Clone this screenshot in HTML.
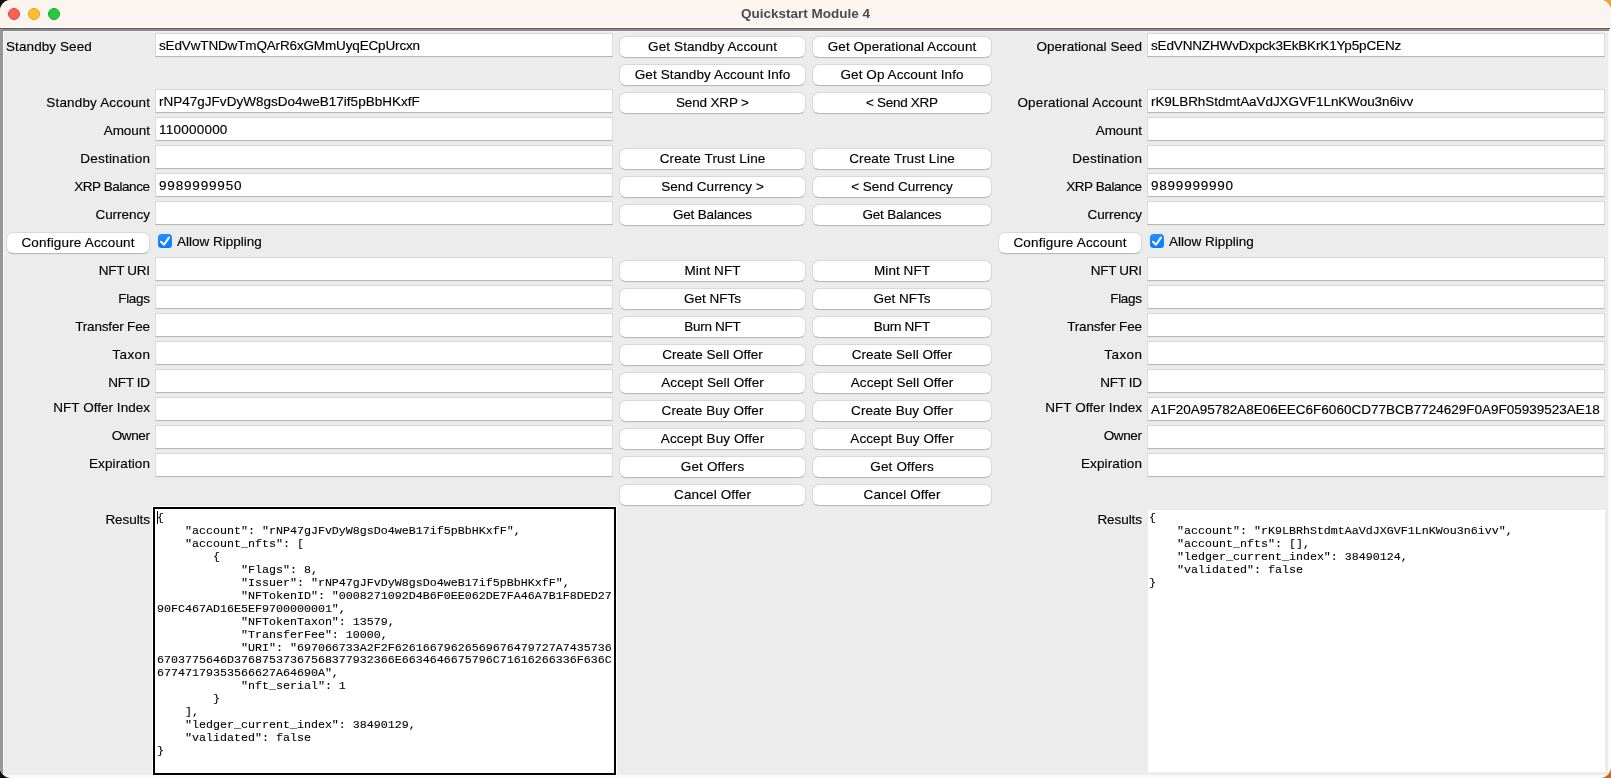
<!DOCTYPE html>
<html><head><meta charset="utf-8"><title>Quickstart Module 4</title>
<style>
*{box-sizing:border-box;margin:0;padding:0}
html,body{width:1611px;height:778px;overflow:hidden;background:#fdfdfd;position:relative;font-family:"Liberation Sans",sans-serif;color:#1a1a1a}
.abs{position:absolute}
#tl{left:0;top:0;width:14px;height:14px;background:#111}
#tr{left:1597px;top:0;width:14px;height:14px;background:#f0a23c}
#bl{left:0;top:764px;width:14px;height:14px;background:#111}
#br{left:1597px;top:764px;width:14px;height:14px;background:#d2601e}
#frame{will-change:transform;left:0;top:0;width:1611px;height:778px;background:#fbfbfb;border-radius:11px;overflow:hidden}
#win{left:0;top:28px;width:1608px;height:747px;background:#ececec}
#title{left:0;top:0;width:1611px;height:28px;background:#fbf4ef}
#tline1{left:0;top:27px;width:1611px;height:1px;background:#fffdf9}
#tline2{left:0;top:28px;width:1610px;height:1px;background:#5c5c5c}
#tline3{left:0;top:29px;width:1609px;height:2px;background:#8b8b8b}
#lborder{left:0;top:29px;width:3px;height:746px;background:#969696}
#lhi{left:3px;top:31px;width:1px;height:744px;background:#f6f6f6}
#thi{left:3px;top:31px;width:1605px;height:1px;background:#f3f3f3}
.dot{position:absolute;top:8px;width:12px;height:12px;border-radius:50%}
#ttext{left:0;top:0;width:1611px;text-align:center;font-weight:bold;font-size:13.5px;line-height:28px;color:#4c4c4c}
.lbl{position:absolute;font-size:13.5px;-webkit-text-stroke:0.15px #000;white-space:nowrap;line-height:16px;color:#000}
.lbl.r{text-align:right}
.ent{position:absolute;width:458px;height:24px;background:#fff;border-left:1px solid #dadada;border-right:1px solid #dadada;border-top:1px solid #d6d6d6;border-bottom:1px solid #b9b9b9;box-shadow:0 1px 0 #e6e6e6}
.ent span{position:absolute;left:3px;font-size:13.5px;-webkit-text-stroke:0.15px #000;line-height:16px;white-space:nowrap;color:#000}
.btn{position:absolute;height:22px;background:#fff;border-radius:7px;border:1px solid #d8d8d8;border-bottom-color:#bababa;box-shadow:0 0.5px 0.5px rgba(0,0,0,0.06)}
.btn span{position:absolute;left:0;right:0;text-align:center;font-size:13.5px;-webkit-text-stroke:0.15px #000;line-height:16px;white-space:nowrap;color:#000}
.cb{position:absolute;width:14px;height:14px;background:linear-gradient(#2a8bff,#0a7bff);border-radius:3.5px}
.mono{position:absolute;font-family:"Liberation Mono",monospace;font-size:11.667px;line-height:12.95px;white-space:pre;color:#000;-webkit-text-stroke:0.1px #000}
</style></head><body>
<div class="abs" id="tl"></div><div class="abs" id="tr"></div><div class="abs" id="bl"></div><div class="abs" id="br"></div>
<div class="abs" id="frame">
<div class="abs" id="title"></div><div class="abs" id="win"></div>
<div class="abs" id="tline1"></div><div class="abs" id="tline2"></div><div class="abs" id="tline3"></div>
<div class="abs" id="lborder"></div><div class="abs" id="lhi"></div><div class="abs" id="thi"></div>
<div class="dot" style="left:8px;background:#fe5f57;border:0.5px solid #e2463f"></div>
<div class="dot" style="left:28px;background:#febc2e;border:0.5px solid #e1a116"></div>
<div class="dot" style="left:48px;background:#28c840;border:0.5px solid #12ac28"></div>
<div class="abs" id="ttext">Quickstart Module 4</div>

<div class="lbl r" style="left:-150px;width:300px;top:95px;letter-spacing:0.171px;transform:translateX(0.171px)">Standby Account</div>
<div class="lbl r" style="left:-150px;width:300px;top:123px;letter-spacing:-0.040px;transform:translateX(-0.040px)">Amount</div>
<div class="lbl r" style="left:-150px;width:300px;top:151px;letter-spacing:0.220px;transform:translateX(0.220px)">Destination</div>
<div class="lbl r" style="left:-150px;width:300px;top:179px;letter-spacing:-0.420px;transform:translateX(-0.420px)">XRP Balance</div>
<div class="lbl r" style="left:-150px;width:300px;top:207px;letter-spacing:-0.029px;transform:translateX(-0.029px)">Currency</div>
<div class="lbl r" style="left:-150px;width:300px;top:263px;letter-spacing:-0.300px;transform:translateX(-0.300px)">NFT URI</div>
<div class="lbl r" style="left:-150px;width:300px;top:291px;letter-spacing:-0.300px;transform:translateX(-0.300px)">Flags</div>
<div class="lbl r" style="left:-150px;width:300px;top:319px;letter-spacing:-0.182px;transform:translateX(-0.182px)">Transfer Fee</div>
<div class="lbl r" style="left:-150px;width:300px;top:347px;letter-spacing:0.400px;transform:translateX(0.400px)">Taxon</div>
<div class="lbl r" style="left:-150px;width:300px;top:375px;letter-spacing:-0.320px;transform:translateX(-0.320px)">NFT ID</div>
<div class="lbl r" style="left:-150px;width:300px;top:400px;letter-spacing:0.029px;transform:translateX(0.029px)">NFT Offer Index</div>
<div class="lbl r" style="left:-150px;width:300px;top:428px;letter-spacing:-0.350px;transform:translateX(-0.350px)">Owner</div>
<div class="lbl r" style="left:-150px;width:300px;top:456px;letter-spacing:0.111px;transform:translateX(0.111px)">Expiration</div>
<div class="ent" style="left:155px;top:33px"><span style="top:4px;letter-spacing:-0.147px;transform:translateX(0.000px)">sEdVwTNDwTmQArR6xGMmUyqECpUrcxn</span></div>
<div class="ent" style="left:155px;top:89px"><span style="top:4px;letter-spacing:0.012px;transform:translateX(0.000px)">rNP47gJFvDyW8gsDo4weB17if5pBbHKxfF</span></div>
<div class="ent" style="left:155px;top:117px"><span style="top:4px;letter-spacing:0.225px;transform:translateX(0.000px)">110000000</span></div>
<div class="ent" style="left:155px;top:145px"><span style="top:4px"></span></div>
<div class="ent" style="left:155px;top:173px"><span style="top:4px;letter-spacing:0.822px;transform:translateX(0.000px)">9989999950</span></div>
<div class="ent" style="left:155px;top:201px"><span style="top:4px"></span></div>
<div class="ent" style="left:155px;top:257px"><span style="top:4px"></span></div>
<div class="ent" style="left:155px;top:285px"><span style="top:4px"></span></div>
<div class="ent" style="left:155px;top:313px"><span style="top:4px"></span></div>
<div class="ent" style="left:155px;top:341px"><span style="top:4px"></span></div>
<div class="ent" style="left:155px;top:369px"><span style="top:4px"></span></div>
<div class="ent" style="left:155px;top:397px"><span style="top:4px"></span></div>
<div class="ent" style="left:155px;top:425px"><span style="top:4px"></span></div>
<div class="ent" style="left:155px;top:453px"><span style="top:4px"></span></div>
<div class="lbl r" style="left:842px;width:300px;top:95px;letter-spacing:0.167px;transform:translateX(0.167px)">Operational Account</div>
<div class="lbl r" style="left:842px;width:300px;top:123px;letter-spacing:-0.040px;transform:translateX(-0.040px)">Amount</div>
<div class="lbl r" style="left:842px;width:300px;top:151px;letter-spacing:0.220px;transform:translateX(0.220px)">Destination</div>
<div class="lbl r" style="left:842px;width:300px;top:179px;letter-spacing:-0.420px;transform:translateX(-0.420px)">XRP Balance</div>
<div class="lbl r" style="left:842px;width:300px;top:207px;letter-spacing:-0.029px;transform:translateX(-0.029px)">Currency</div>
<div class="lbl r" style="left:842px;width:300px;top:263px;letter-spacing:-0.300px;transform:translateX(-0.300px)">NFT URI</div>
<div class="lbl r" style="left:842px;width:300px;top:291px;letter-spacing:-0.300px;transform:translateX(-0.300px)">Flags</div>
<div class="lbl r" style="left:842px;width:300px;top:319px;letter-spacing:-0.182px;transform:translateX(-0.182px)">Transfer Fee</div>
<div class="lbl r" style="left:842px;width:300px;top:347px;letter-spacing:0.400px;transform:translateX(0.400px)">Taxon</div>
<div class="lbl r" style="left:842px;width:300px;top:375px;letter-spacing:-0.320px;transform:translateX(-0.320px)">NFT ID</div>
<div class="lbl r" style="left:842px;width:300px;top:400px;letter-spacing:0.029px;transform:translateX(0.029px)">NFT Offer Index</div>
<div class="lbl r" style="left:842px;width:300px;top:428px;letter-spacing:-0.350px;transform:translateX(-0.350px)">Owner</div>
<div class="lbl r" style="left:842px;width:300px;top:456px;letter-spacing:0.111px;transform:translateX(0.111px)">Expiration</div>
<div class="lbl r" style="left:842px;width:300px;top:39px;letter-spacing:0.027px;transform:translateX(0.027px)">Operational Seed</div>
<div class="ent" style="left:1147px;top:33px"><span style="top:4px;letter-spacing:-0.153px;transform:translateX(0.000px)">sEdVNNZHWvDxpck3EkBKrK1Yp5pCENz</span></div>
<div class="ent" style="left:1147px;top:89px"><span style="top:4px;letter-spacing:-0.073px;transform:translateX(0.000px)">rK9LBRhStdmtAaVdJXGVF1LnKWou3n6ivv</span></div>
<div class="ent" style="left:1147px;top:117px"><span style="top:4px"></span></div>
<div class="ent" style="left:1147px;top:145px"><span style="top:4px"></span></div>
<div class="ent" style="left:1147px;top:173px"><span style="top:4px;letter-spacing:0.778px;transform:translateX(0.000px)">9899999990</span></div>
<div class="ent" style="left:1147px;top:201px"><span style="top:4px"></span></div>
<div class="ent" style="left:1147px;top:257px"><span style="top:4px"></span></div>
<div class="ent" style="left:1147px;top:285px"><span style="top:4px"></span></div>
<div class="ent" style="left:1147px;top:313px"><span style="top:4px"></span></div>
<div class="ent" style="left:1147px;top:341px"><span style="top:4px"></span></div>
<div class="ent" style="left:1147px;top:369px"><span style="top:4px"></span></div>
<div class="ent" style="left:1147px;top:397px"><span style="top:4px">A1F20A95782A8E06EEC6F6060CD77BCB7724629F0A9F05939523AE18</span></div>
<div class="ent" style="left:1147px;top:425px"><span style="top:4px"></span></div>
<div class="ent" style="left:1147px;top:453px"><span style="top:4px"></span></div>
<div class="lbl" style="left:6px;top:39px;letter-spacing:0.091px;transform:translateX(0.000px)">Standby Seed</div>
<div class="btn" style="left:619px;width:187px;top:36px"><span style="top:2px;letter-spacing:0.111px;transform:translateX(0.056px)">Get Standby Account</span></div>
<div class="btn" style="left:812px;width:180px;top:36px"><span style="top:2px;letter-spacing:0.064px;transform:translateX(0.032px)">Get Operational Account</span></div>
<div class="btn" style="left:619px;width:187px;top:64px"><span style="top:2px;letter-spacing:0.104px;transform:translateX(0.052px)">Get Standby Account Info</span></div>
<div class="btn" style="left:812px;width:180px;top:64px"><span style="top:2px;letter-spacing:0.078px;transform:translateX(0.039px)">Get Op Account Info</span></div>
<div class="btn" style="left:619px;width:187px;top:92px"><span style="top:2px;letter-spacing:-0.156px;transform:translateX(-0.078px)">Send XRP &gt;</span></div>
<div class="btn" style="left:812px;width:180px;top:92px"><span style="top:2px;letter-spacing:-0.289px;transform:translateX(-0.144px)">&lt; Send XRP</span></div>
<div class="btn" style="left:619px;width:187px;top:148px"><span style="top:2px;letter-spacing:0.125px;transform:translateX(0.062px)">Create Trust Line</span></div>
<div class="btn" style="left:812px;width:180px;top:148px"><span style="top:2px;letter-spacing:0.125px;transform:translateX(0.062px)">Create Trust Line</span></div>
<div class="btn" style="left:619px;width:187px;top:176px"><span style="top:2px;letter-spacing:0.071px;transform:translateX(0.036px)">Send Currency &gt;</span></div>
<div class="btn" style="left:812px;width:180px;top:176px"><span style="top:2px">&lt; Send Currency</span></div>
<div class="btn" style="left:619px;width:187px;top:204px"><span style="top:2px;letter-spacing:-0.182px;transform:translateX(-0.091px)">Get Balances</span></div>
<div class="btn" style="left:812px;width:180px;top:204px"><span style="top:2px;letter-spacing:-0.182px;transform:translateX(-0.091px)">Get Balances</span></div>
<div class="btn" style="left:619px;width:187px;top:260px"><span style="top:2px;letter-spacing:0.057px;transform:translateX(0.029px)">Mint NFT</span></div>
<div class="btn" style="left:812px;width:180px;top:260px"><span style="top:2px;letter-spacing:0.057px;transform:translateX(0.029px)">Mint NFT</span></div>
<div class="btn" style="left:619px;width:187px;top:288px"><span style="top:2px;letter-spacing:-0.029px;transform:translateX(-0.014px)">Get NFTs</span></div>
<div class="btn" style="left:812px;width:180px;top:288px"><span style="top:2px;letter-spacing:-0.029px;transform:translateX(-0.014px)">Get NFTs</span></div>
<div class="btn" style="left:619px;width:187px;top:316px"><span style="top:2px;letter-spacing:-0.314px;transform:translateX(-0.157px)">Burn NFT</span></div>
<div class="btn" style="left:812px;width:180px;top:316px"><span style="top:2px;letter-spacing:-0.314px;transform:translateX(-0.157px)">Burn NFT</span></div>
<div class="btn" style="left:619px;width:187px;top:344px"><span style="top:2px;letter-spacing:0.025px;transform:translateX(0.013px)">Create Sell Offer</span></div>
<div class="btn" style="left:812px;width:180px;top:344px"><span style="top:2px;letter-spacing:0.025px;transform:translateX(0.013px)">Create Sell Offer</span></div>
<div class="btn" style="left:619px;width:187px;top:372px"><span style="top:2px;letter-spacing:0.100px;transform:translateX(0.050px)">Accept Sell Offer</span></div>
<div class="btn" style="left:812px;width:180px;top:372px"><span style="top:2px;letter-spacing:0.100px;transform:translateX(0.050px)">Accept Sell Offer</span></div>
<div class="btn" style="left:619px;width:187px;top:400px"><span style="top:2px;letter-spacing:0.053px;transform:translateX(0.027px)">Create Buy Offer</span></div>
<div class="btn" style="left:812px;width:180px;top:400px"><span style="top:2px;letter-spacing:0.053px;transform:translateX(0.027px)">Create Buy Offer</span></div>
<div class="btn" style="left:619px;width:187px;top:428px"><span style="top:2px;letter-spacing:0.107px;transform:translateX(0.053px)">Accept Buy Offer</span></div>
<div class="btn" style="left:812px;width:180px;top:428px"><span style="top:2px;letter-spacing:0.107px;transform:translateX(0.053px)">Accept Buy Offer</span></div>
<div class="btn" style="left:619px;width:187px;top:456px"><span style="top:2px;letter-spacing:0.156px;transform:translateX(0.078px)">Get Offers</span></div>
<div class="btn" style="left:812px;width:180px;top:456px"><span style="top:2px;letter-spacing:0.156px;transform:translateX(0.078px)">Get Offers</span></div>
<div class="btn" style="left:619px;width:187px;top:484px"><span style="top:2px;letter-spacing:0.127px;transform:translateX(0.064px)">Cancel Offer</span></div>
<div class="btn" style="left:812px;width:180px;top:484px"><span style="top:2px;letter-spacing:0.127px;transform:translateX(0.064px)">Cancel Offer</span></div>
<div class="btn" style="left:6px;width:144px;top:232px"><span style="top:2px;letter-spacing:0.175px;transform:translateX(0.088px)">Configure Account</span></div>
<div class="cb" style="left:158px;top:234px"><svg width="14" height="14" viewBox="0 0 14 14" style="position:absolute;left:0;top:0"><path d="M3 7.7 L6 10.7 L10.9 3.6" fill="none" stroke="#fff" stroke-width="2" stroke-linecap="round" stroke-linejoin="round"/></svg></div>
<div class="lbl" style="left:177px;top:234px">Allow Rippling</div>
<div class="btn" style="left:998px;width:144px;top:232px"><span style="top:2px;letter-spacing:0.175px;transform:translateX(0.088px)">Configure Account</span></div>
<div class="cb" style="left:1150px;top:234px"><svg width="14" height="14" viewBox="0 0 14 14" style="position:absolute;left:0;top:0"><path d="M3 7.7 L6 10.7 L10.9 3.6" fill="none" stroke="#fff" stroke-width="2" stroke-linecap="round" stroke-linejoin="round"/></svg></div>
<div class="lbl" style="left:1169px;top:234px">Allow Rippling</div>
<div class="lbl r" style="left:-150px;width:300px;top:512px;letter-spacing:-0.067px;transform:translateX(-0.067px)">Results</div>
<div class="lbl r" style="left:842px;width:300px;top:512px;letter-spacing:-0.067px;transform:translateX(-0.067px)">Results</div>
<div class="abs" style="left:152px;top:506px;width:465px;height:270px;background:#fff"></div>
<div class="abs" style="left:153px;top:507px;width:463px;height:268px;background:#fff;border:2px solid #000"></div>
<div class="abs" style="left:157px;top:511px;width:1px;height:13px;background:#000"></div>
<div class="mono" style="left:157px;top:512px">{
    &quot;account&quot;: &quot;rNP47gJFvDyW8gsDo4weB17if5pBbHKxfF&quot;,
    &quot;account_nfts&quot;: [
        {
            &quot;Flags&quot;: 8,
            &quot;Issuer&quot;: &quot;rNP47gJFvDyW8gsDo4weB17if5pBbHKxfF&quot;,
            &quot;NFTokenID&quot;: &quot;0008271092D4B6F0EE062DE7FA46A7B1F8DED27
90FC467AD16E5EF9700000001&quot;,
            &quot;NFTokenTaxon&quot;: 13579,
            &quot;TransferFee&quot;: 10000,
            &quot;URI&quot;: &quot;697066733A2F2F62616679626569676479727A7435736
6703775646D37687537367568377932366E6634646675796C71616266336F636C
67747179353566627A64690A&quot;,
            &quot;nft_serial&quot;: 1
        }
    ],
    &quot;ledger_current_index&quot;: 38490129,
    &quot;validated&quot;: false
}</div>
<div class="abs" style="left:1148px;top:510px;width:457px;height:262px;background:#fff"></div>
<div class="mono" style="left:1149px;top:512px">{
    &quot;account&quot;: &quot;rK9LBRhStdmtAaVdJXGVF1LnKWou3n6ivv&quot;,
    &quot;account_nfts&quot;: [],
    &quot;ledger_current_index&quot;: 38490124,
    &quot;validated&quot;: false
}</div>
</div>
</body></html>
